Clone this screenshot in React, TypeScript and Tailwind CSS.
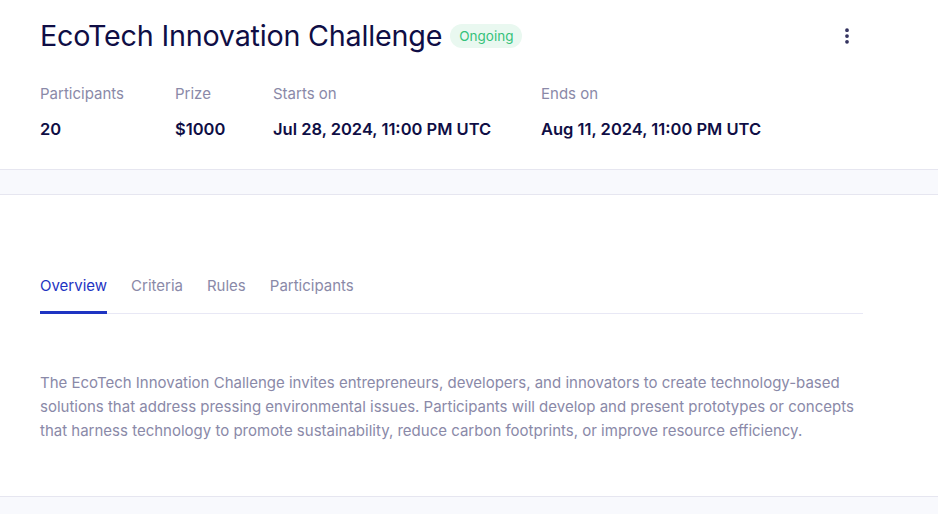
import { EllipsisVertical } from "lucide-react"

export default function App() {
  const stats = [
    { label: "Participants", value: "20", w: "w-[135px]" },
    { label: "Prize", value: "$1000", w: "w-[98px]" },
    { label: "Starts on", value: "Jul 28, 2024, 11:00 PM UTC", w: "w-[268px]" },
    { label: "Ends on", value: "Aug 11, 2024, 11:00 PM UTC", w: "" },
  ]
  const tabs = ["Overview", "Criteria", "Rules", "Participants"]

  return (
    <div className="min-h-[514px] bg-[#f8f9fd] font-['Inter',sans-serif]">
      <div className="bg-white border-b border-[#e6e6f0] px-10 pt-[18px] pb-[30px]">
        <div className="flex items-center justify-between">
          <div className="flex items-center gap-[8px]">
            <h1 className="text-[28.7px] leading-[36px] text-[#0f0e45] tracking-[-0.2px]">EcoTech Innovation Challenge</h1>
            <span className="rounded-full bg-[#e9f8f0] px-[9px] py-[2px] text-[13.5px] text-[#35c27a]">Ongoing</span>
          </div>
          <EllipsisVertical className="mr-[41px] h-5 w-5 text-[#2f2e5c]" strokeWidth={2.5} />
        </div>
        <div className="mt-[30px] flex">
          {stats.map((s) => (
            <div key={s.label} className={s.w}>
              <div className="text-[15px] leading-5 text-[#8a89a8]">{s.label}</div>
              <div className="mt-[15px] text-[16.5px] font-semibold leading-5 text-[#0f0e45]">{s.value}</div>
            </div>
          ))}
        </div>
      </div>
      <div className="h-[24px]" />
      <div className="bg-white border-y border-[#e6e6f0] px-10 pt-[81px] pb-[53px]">
        <div className="w-[823px] border-b border-[#e8e8f5] flex gap-6">
          {tabs.map((t, i) => (
            <div
              key={t}
              className={
                i === 0
                  ? "border-b-[3px] border-[#1e34c2] pb-[15px] text-[15px] leading-5 text-[#1e34c2] -mb-[1px]"
                  : "pb-[15px] text-[15px] leading-5 text-[#8a89a8]"
              }
            >
              {t}
            </div>
          ))}
        </div>
        <p className="mt-[57px] w-[840px] text-[15px] leading-6 text-[#8a89a8]">
          The EcoTech Innovation Challenge invites entrepreneurs, developers, and innovators to create technology-based
          solutions that address pressing environmental issues. Participants will develop and present prototypes or concepts
          that harness technology to promote sustainability, reduce carbon footprints, or improve resource efficiency.
        </p>
      </div>
    </div>
  )
}
